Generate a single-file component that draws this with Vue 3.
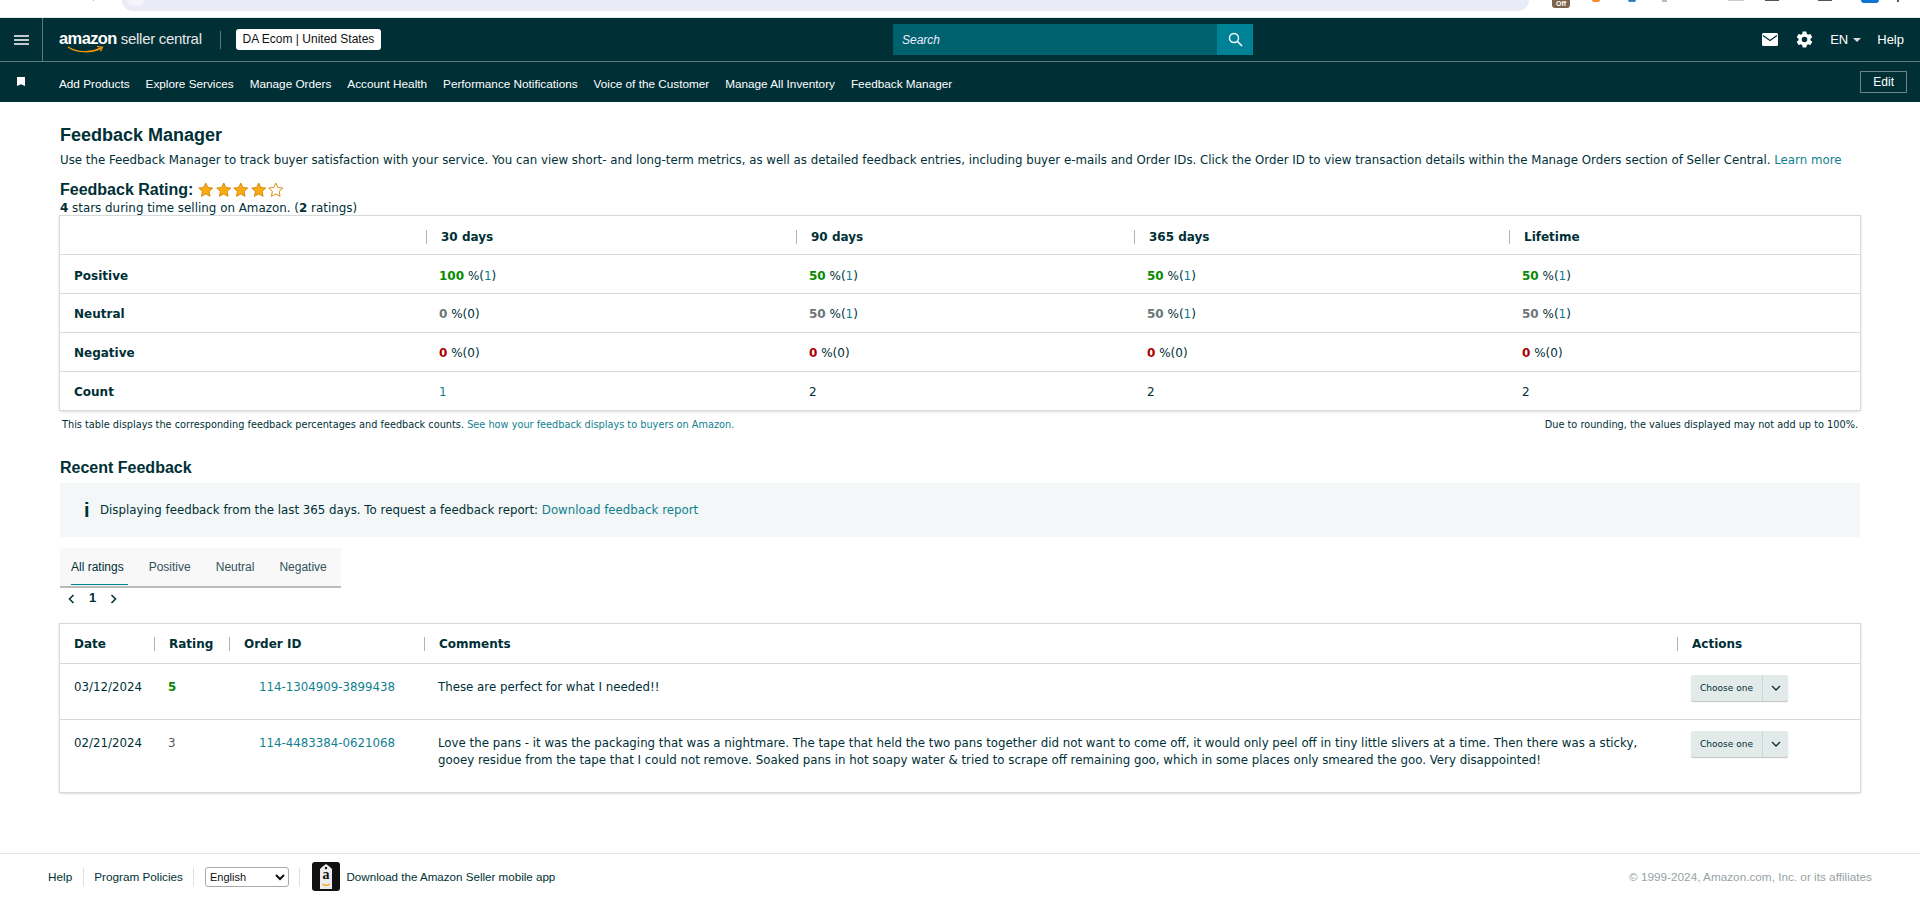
<template>
  <div class="page">
    <div class="chrome">
      <div class="tick"></div>
      <div class="address"><span class="site-badge"></span></div>
      <div class="ext-icons">
        <span class="ext off">Off</span>
        <span class="ext orange"></span>
        <span class="ext blue"></span>
        <span class="ext pin"></span>
        <span class="ext outline"></span>
        <span class="ext dark"></span>
        <span class="ext dark second"></span>
        <span class="ext profile"></span>
        <span class="ext menu"></span>
      </div>
    </div>

    <header class="topbar">
      <div class="burger">
        <svg width="15" height="10" viewBox="0 0 15 10"><path d="M0 1h15M0 5h15M0 9h15" stroke="#fff" stroke-width="1.500" /></svg>
      </div>
      <div class="logo">
        <span class="logo-amazon">amazon</span>
        <span class="logo-seller">seller central</span>
        <svg class="smile" width="38" height="8" viewBox="0 0 38 8"><path d="M1 1c9 6 24 6 33 1" fill="none" stroke="#f90" stroke-width="1.500" /><path d="M30 .5l5.500.8-2 4" fill="none" stroke="#f90" stroke-width="1.200" /></svg>
      </div>
      <div class="logo-sep"></div>
      <div class="account">DA Ecom | United States</div>
      <div class="search">
        <span class="search-text">Search</span>
        <span class="search-btn">
          <svg width="15" height="15" viewBox="0 0 15 15"><circle cx="6" cy="6" r="4.500" fill="none" stroke="#fff" stroke-width="1.400" /><path d="M9.500 9.500l4.500 4.500" stroke="#fff" stroke-width="1.600" /></svg>
        </span>
      </div>
      <div class="top-right">
        <svg width="16" height="13" viewBox="0 0 16 13"><rect width="16" height="13" rx="1.500" fill="#fff" /><path d="M1 2.500l7 5 7-5" fill="none" stroke="#002f36" stroke-width="1.300" /></svg>
        <svg class="gear" width="19" height="19" viewBox="0 0 24 24"><path fill="#fff" d="M19.430 12.980c.04-.32.070-.64.070-.98s-.030-.66-.070-.98l2.110-1.650c.19-.15.240-.42.120-.64l-2-3.460c-.12-.22-.39-.3-.61-.22l-2.490 1c-.52-.4-1.080-.73-1.690-.98l-.38-2.650A.488.488 0 0 0 14 2h-4c-.25 0-.46.18-.49.42l-.38 2.650c-.61.25-1.170.59-1.690.98l-2.490-1c-.23-.09-.49 0-.61.22l-2 3.460c-.13.22-.07.49.12.64l2.110 1.650c-.04.32-.07.65-.07.98s.030.66.070.98l-2.110 1.650c-.19.15-.24.42-.12.64l2 3.460c.12.22.39.3.61.22l2.490-1c.52.4 1.080.73 1.690.98l.38 2.650c.03.24.24.42.49.42h4c.25 0 .46-.18.49-.42l.38-2.650c.61-.25 1.170-.59 1.690-.98l2.490 1c.23.09.49 0 .61-.22l2-3.460c.12-.22.07-.49-.12-.64l-2.110-1.650zM12 15.500a3.500 3.500 0 1 1 0-7 3.500 3.500 0 0 1 0 7z" /></svg>
        <span class="lang">EN<i class="caret"></i></span>
        <span class="help">Help</span>
      </div>
    </header>

    <nav class="navbar">
      <svg class="bookmark" width="8" height="9" viewBox="0 0 8 9"><path d="M0 0h8v9L4 7.200 0 9z" fill="#fff" /></svg>
      <a v-for="item in navItems" :key="item">{{ item }}</a>
      <span class="edit">Edit</span>
    </nav>

    <main class="content">
      <h1>Feedback Manager</h1>
      <p class="intro">
        Use the Feedback Manager to track buyer satisfaction with your service. You can view short- and long-term metrics, as well as detailed feedback entries, including buyer e-mails and Order IDs. Click the Order ID to view transaction details within the Manage Orders section of Seller Central.
        <a>Learn more</a>
      </p>
      <div class="rating-title">
        <h2>Feedback Rating:</h2>
        <svg v-for="n in 5" :key="n" class="star" width="15" height="15" viewBox="0 0 24 24">
          <path d="M12 1.500l3.200 7 7.600.9-5.600 5.200 1.500 7.600L12 18.400l-6.700 3.800 1.500-7.600L1.200 9.400l7.600-.9z" :fill="n < 5 ? '#fdab12' : '#fff'" stroke="#d1890c" stroke-width="1.500" />
        </svg>
      </div>
      <p class="rating-sub"><b>4</b> stars during time selling on Amazon. (<b>2</b> ratings)</p>

      <table class="box ratings">
        <colgroup>
          <col class="r0" /><col class="r1" /><col class="r2" /><col class="r3" /><col />
        </colgroup>
        <thead>
          <tr>
            <th></th>
            <th v-for="p in periods" :key="p"><span class="th-in">{{ p }}</span></th>
          </tr>
        </thead>
        <tbody>
          <tr v-for="row in ratingRows" :key="row.label">
            <td class="label">{{ row.label }}</td>
            <td v-for="(cell, i) in row.cells" :key="i">
              <b :class="row.tone">{{ cell.pct }}</b> %(<a v-if="cell.link">{{ cell.n }}</a><template v-else>{{ cell.n }}</template>)
            </td>
          </tr>
          <tr>
            <td class="label">Count</td>
            <td><a>1</a></td>
            <td>2</td>
            <td>2</td>
            <td>2</td>
          </tr>
        </tbody>
      </table>

      <div class="table-note">
        <span>This table displays the corresponding feedback percentages and feedback counts. <a>See how your feedback displays to buyers on Amazon.</a></span>
        <span>Due to rounding, the values displayed may not add up to 100%.</span>
      </div>

      <h2 class="recent">Recent Feedback</h2>
      <div class="info">
        <span class="info-i">i</span>
        <span>Displaying feedback from the last 365 days. To request a feedback report: <a>Download feedback report</a></span>
      </div>

      <div class="tabs">
        <span v-for="(tab, i) in tabs" :key="tab" class="tab" :class="{ active: i === 0 }">{{ tab }}</span>
      </div>
      <div class="pager">
        <svg width="7" height="10" viewBox="0 0 7 10"><path d="M5.500 1L1.500 5l4 4" fill="none" stroke="#002f36" stroke-width="1.500" /></svg>
        <span class="page-num">1</span>
        <svg width="7" height="10" viewBox="0 0 7 10"><path d="M1.500 1l4 4-4 4" fill="none" stroke="#002f36" stroke-width="1.500" /></svg>
      </div>

      <table class="box feedback">
        <colgroup>
          <col class="f0" /><col class="f1" /><col class="f2" /><col class="f3" /><col />
        </colgroup>
        <thead>
          <tr>
            <th class="first">Date</th>
            <th v-for="h in feedbackHeads" :key="h"><span class="th-in">{{ h }}</span></th>
          </tr>
        </thead>
        <tbody>
          <tr v-for="row in feedback" :key="row.order" :class="row.cls">
            <td>{{ row.date }}</td>
            <td><b v-if="row.rating === 5" class="pos">5</b><span v-else class="grey">{{ row.rating }}</span></td>
            <td><a class="order">{{ row.order }}</a></td>
            <td class="comment">{{ row.comment }}</td>
            <td class="act">
              <div class="choose">
                <span class="choose-label">Choose one</span>
                <span class="choose-arrow">
                  <svg width="10" height="6" viewBox="0 0 10 6"><path d="M1 1l4 4 4-4" fill="none" stroke="#002f36" stroke-width="1.300" /></svg>
                </span>
              </div>
            </td>
          </tr>
        </tbody>
      </table>
    </main>

    <footer class="footer">
      <span class="foot-link">Help</span>
      <span class="foot-sep"></span>
      <span class="foot-link">Program Policies</span>
      <span class="foot-sep"></span>
      <select class="foot-select"><option>English</option></select>
      <span class="foot-sep tile-sep"></span>
      <span class="app-tile">
        <svg width="28" height="29" viewBox="0 0 28 29">
          <rect width="28" height="29" rx="3" fill="#111" />
          <path d="M10 5l4-3 4 3 2 2v20H8V7z" fill="#ececec" />
          <circle cx="14" cy="6" r="1.200" fill="#111" />
          <path d="M10.500 22c2.500 1.800 5 1.800 7 0" fill="none" stroke="#f90" stroke-width="1.200" />
        </svg>
        <span class="tile-a">a</span>
      </span>
      <span class="foot-link app-text">Download the Amazon Seller mobile app</span>
      <span class="copyright">© 1999-2024, Amazon.com, Inc. or its affiliates</span>
    </footer>
  </div>
</template>

<script setup>
const navItems = [
  "Add Products",
  "Explore Services",
  "Manage Orders",
  "Account Health",
  "Performance Notifications",
  "Voice of the Customer",
  "Manage All Inventory",
  "Feedback Manager",
];

const periods = ["30 days", "90 days", "365 days", "Lifetime"];

const ratingRows = [
  {
    label: "Positive",
    tone: "pos",
    cells: [
      { pct: 100, n: 1, link: true },
      { pct: 50, n: 1, link: true },
      { pct: 50, n: 1, link: true },
      { pct: 50, n: 1, link: true },
    ],
  },
  {
    label: "Neutral",
    tone: "neu",
    cells: [
      { pct: 0, n: 0 },
      { pct: 50, n: 1, link: true },
      { pct: 50, n: 1, link: true },
      { pct: 50, n: 1, link: true },
    ],
  },
  {
    label: "Negative",
    tone: "neg",
    cells: [
      { pct: 0, n: 0 },
      { pct: 0, n: 0 },
      { pct: 0, n: 0 },
      { pct: 0, n: 0 },
    ],
  },
];

const tabs = ["All ratings", "Positive", "Neutral", "Negative"];

const feedbackHeads = ["Rating", "Order ID", "Comments", "Actions"];

const feedback = [
  {
    date: "03/12/2024",
    rating: 5,
    order: "114-1304909-3899438",
    comment: "These are perfect for what I needed!!",
    cls: "short",
  },
  {
    date: "02/21/2024",
    rating: 3,
    order: "114-4483384-0621068",
    comment:
      "Love the pans - it was the packaging that was a nightmare. The tape that held the two pans together did not want to come off, it would only peel off in tiny little slivers at a time. Then there was a sticky, gooey residue from the tape that I could not remove. Soaked pans in hot soapy water & tried to scrape off remaining goo, which in some places only smeared the goo. Very disappointed!",
    cls: "tall",
  },
];
</script>

<style>
html,
body {
  margin: 0;
  background: #fff;
}
</style>

<style scoped>
.page {
  height: 923px;
  overflow: hidden;
  font-family: "DejaVu Sans", sans-serif;
  font-size: 12px;
  color: #002f36;
}
a {
  color: #0f7f90;
}

.chrome {
  height: 18px;
  display: flex;
  align-items: flex-start;
  background: #fff;
  border-bottom: 1px solid #e8e8e8;
  box-sizing: border-box;
}
.tick {
  width: 1px;
  height: 1px;
  background: #bbb;
  margin-left: 93px;
}
.address {
  margin-left: 28px;
  width: 1407px;
  height: 11px;
  background: #e9ebf6;
  border-radius: 0 0 14px 14px;
  padding-left: 5px;
  box-sizing: border-box;
}
.site-badge {
  display: block;
  width: 17px;
  height: 6px;
  background: #f5f5fb;
  border-radius: 0 0 9px 9px;
}
.ext-icons {
  display: flex;
  align-items: flex-start;
}
.ext {
  display: block;
}
.off {
  margin-left: 23px;
  width: 18px;
  height: 8px;
  background: #7c654c;
  border-radius: 0 0 3px 3px;
  color: #fff;
  font: bold 7px/7px "Liberation Sans", sans-serif;
  text-align: center;
}
.orange {
  margin-left: 22px;
  width: 8px;
  height: 2px;
  background: #f58a2a;
  border-radius: 0 0 4px 4px;
}
.blue {
  margin-left: 28px;
  width: 8px;
  height: 2px;
  background: #2a7fc0;
  border-radius: 0 0 4px 4px;
}
.pin {
  margin-left: 26px;
  width: 5px;
  height: 2px;
  background: #bbb;
}
.outline {
  margin-left: 61px;
  width: 16px;
  height: 1px;
  background: #ccc;
}
.dark {
  margin-left: 21px;
  width: 14px;
  height: 1px;
  background: #555;
}
.second {
  margin-left: 39px;
}
.profile {
  margin-left: 29px;
  width: 18px;
  height: 3px;
  background: #1173d4;
  border-radius: 0 0 9px 9px;
}
.menu {
  margin-left: 18px;
  width: 2px;
  height: 2px;
  background: #555;
}

.topbar {
  height: 44px;
  background: #002f36;
  border-bottom: 1px solid #5c7a7e;
  display: flex;
  align-items: center;
  color: #fff;
  font-family: "Liberation Sans", Arial, sans-serif;
  box-sizing: border-box;
  position: relative;
}
.burger {
  width: 42px;
  height: 100%;
  border-right: 1px solid #5c7a7e;
  display: flex;
  align-items: center;
  justify-content: center;
}
.logo {
  margin-left: 16px;
  width: 155px;
  position: relative;
  white-space: nowrap;
  margin-top: -3px;
}
.logo-amazon {
  font-size: 16.500px;
  font-weight: 700;
  letter-spacing: -0.6px;
}
.logo-seller {
  font-size: 15px;
  margin-left: 4px;
  color: #e4e8e8;
  letter-spacing: -0.3px;
}
.smile {
  position: absolute;
  left: 8px;
  top: 17px;
}
.logo-sep {
  width: 1px;
  height: 18px;
  background: #5c7a7e;
  margin-left: 6px;
}
.account {
  margin-left: 15px;
  height: 21px;
  line-height: 21px;
  padding: 0 6.500px;
  background: #fff;
  border-radius: 3px;
  color: #111;
  font-size: 12px;
  white-space: nowrap;
}
.search {
  position: absolute;
  left: 893px;
  top: 6px;
  width: 360px;
  height: 31px;
  background: #00616e;
  display: flex;
  justify-content: space-between;
  align-items: center;
}
.search-text {
  font-style: italic;
  margin-left: 9px;
  font-size: 12px;
  color: #eef;
}
.search-btn {
  width: 36px;
  height: 100%;
  background: #008296;
  display: flex;
  align-items: center;
  justify-content: center;
}
.top-right {
  margin-left: auto;
  display: flex;
  align-items: center;
  font-size: 13px;
  padding-right: 16px;
}
.gear {
  margin-left: 17px;
}
.lang {
  margin-left: 16px;
}
.caret {
  display: inline-block;
  margin-left: 5px;
  border: 4px solid transparent;
  border-top-color: #ddd;
  border-bottom: 0;
  vertical-align: 2px;
}
.help {
  margin-left: 16px;
}

.navbar {
  height: 40px;
  background: #002f36;
  display: flex;
  align-items: center;
  font-family: "Liberation Sans", Arial, sans-serif;
  color: #fff;
  font-size: 11.750px;
  padding-left: 17px;
  padding-right: 13px;
  box-sizing: border-box;
}
.navbar a {
  color: #fff;
  margin-right: 16px;
  margin-top: 3px;
  white-space: nowrap;
}
.bookmark {
  margin-right: 34px;
  margin-top: -1px;
}
.edit {
  margin-left: auto;
  border: 1px solid #6d8588;
  padding: 0 12px;
  height: 22px;
  line-height: 20px;
  box-sizing: border-box;
  margin-top: -1px;
  font-size: 12px;
}

.content {
  padding: 22px 60px 0 60px;
}
h1 {
  margin: 0;
  font-size: 18px;
  line-height: 22px;
  font-weight: 700;
  font-family: "Liberation Sans", Arial, sans-serif;
}
.intro {
  margin: 5px 0 0;
  line-height: 18px;
  font-size: 11.800px;
  white-space: nowrap;
}
.rating-title {
  margin-top: 11px;
  display: flex;
  align-items: center;
  height: 20px;
  gap: 2px;
}
.star {
  width: 15.500px;
  height: 15.500px;
}
h2 {
  margin: 0;
  font-size: 16px;
  font-weight: 700;
  font-family: "Liberation Sans", Arial, sans-serif;
}
.rating-title h2 {
  margin-right: 3px;
}
.rating-sub {
  margin: 1px 0 0;
  line-height: 14px;
  font-size: 11.900px;
}

.box {
  width: 1800px;
  border-collapse: collapse;
  table-layout: fixed;
  box-shadow: 0 0 0 1px #d5dbdb, 0 1px 3px rgba(0, 0, 0, 0.25);
}
.ratings {
  margin-top: 1px;
}
.r0 {
  width: 366px;
}
.r1 {
  width: 370px;
}
.r2 {
  width: 338px;
}
.r3 {
  width: 375px;
}
th {
  text-align: left;
  font-weight: 700;
  padding: 0;
}
.th-in {
  display: block;
  border-left: 1px solid #aab7b8;
  padding-left: 14px;
  line-height: 14px;
}
td {
  padding: 0 14px;
}
.ratings thead th {
  padding-top: 5px;
}
.ratings thead tr {
  height: 38px;
}
.ratings tbody tr {
  height: 39px;
  border-top: 1px solid #d5dbdb;
}
.ratings tbody td {
  padding-top: 2px;
}
.ratings tbody tr:first-child td {
  padding-top: 4px;
}
.ratings .label {
  font-weight: 700;
}
.ratings td:nth-child(n + 2) {
  padding-left: 13px;
}
.pos {
  color: #078a00;
}
.neu {
  color: #6c7778;
}
.neg {
  color: #a00;
}
.grey {
  color: #555;
}

.table-note {
  display: flex;
  justify-content: space-between;
  padding: 8px 2px 0;
  font-size: 9.750px;
  line-height: 13px;
}
.recent {
  margin-top: 27px;
  line-height: 20px;
  font-size: 16px;
}
.info {
  margin-top: 5px;
  height: 54px;
  background: #f3f7f7;
  display: flex;
  align-items: center;
  font-size: 11.800px;
}
.info-i {
  width: 16px;
  margin-left: 24px;
  font-family: "Liberation Sans", sans-serif;
  font-weight: 700;
  font-size: 20px;
}
.tabs {
  margin-top: 11px;
  width: 281px;
  height: 40px;
  background: #f8f8f8;
  border-bottom: 2px solid #bbb;
  box-sizing: border-box;
  display: flex;
  padding-left: 11px;
  gap: 25px;
  font-family: "Liberation Sans", Arial, sans-serif;
}
.tab {
  line-height: 39px;
  height: 37px;
  box-sizing: border-box;
  color: #33525a;
}
.tab.active {
  color: #002f36;
  border-bottom: 1px solid #008296;
  padding-right: 4px;
  margin-right: -4px;
}
.pager {
  height: 22px;
  display: flex;
  align-items: center;
  gap: 14px;
  padding-left: 8px;
  font-weight: 700;
  font-family: "Liberation Sans", Arial, sans-serif;
  font-size: 13px;
}
.page-num {
  margin-top: -4px;
}

.feedback {
  margin-top: 14px;
}
.f0 {
  width: 94px;
}
.f1 {
  width: 75px;
}
.f2 {
  width: 195px;
}
.f3 {
  width: 1253px;
}
.feedback thead tr {
  height: 39px;
}
.feedback thead th {
  padding-top: 2px;
}
.feedback th.first {
  padding-left: 14px;
}
.feedback tbody tr {
  border-top: 1px solid #d5dbdb;
}
.feedback tbody td {
  vertical-align: top;
  padding-top: 15px;
  line-height: 17px;
  padding-left: 14px;
  padding-right: 0;
  font-size: 11.800px;
}
.order {
  padding-left: 16px;
}
.feedback .short {
  height: 56px;
}
.feedback .tall {
  height: 73px;
}
.feedback tbody td.act {
  padding-top: 11px;
}
.choose {
  display: flex;
  width: 97px;
  height: 26px;
  background: #e3eaea;
  border-radius: 2px;
  box-shadow: 0 1px 1px rgba(0, 0, 0, 0.25);
  font-size: 9px;
  line-height: 26px;
}
.choose-label {
  width: 71px;
  text-align: center;
  border-right: 1px solid #cdd6d6;
}
.choose-arrow {
  flex: 1;
  display: flex;
  align-items: center;
  justify-content: center;
}

.footer {
  position: absolute;
  top: 853px;
  left: 0;
  width: 100%;
  box-sizing: border-box;
  border-top: 1px solid #e5e5e5;
  height: 46px;
  padding: 0 48px;
  display: flex;
  align-items: center;
  font-family: "Liberation Sans", Arial, sans-serif;
  font-size: 11.750px;
}
.foot-sep {
  width: 1px;
  height: 18px;
  background: #e0e0e0;
  margin: 0 10.500px;
}
.tile-sep {
  margin-right: 12px;
}
.foot-select {
  width: 84px;
  height: 20px;
  font-family: "Liberation Sans", Arial, sans-serif;
  font-size: 11px;
  background: #fff;
  border: 1px solid #aaa;
  border-radius: 3px;
  color: #111;
}
.app-tile {
  position: relative;
  width: 28px;
  height: 29px;
  margin-right: 6px;
}
.tile-a {
  position: absolute;
  left: 10px;
  top: 6px;
  font: 700 14px/14px "Liberation Serif", serif;
  color: #111;
}
.app-text {
  font-size: 11.600px;
}
.copyright {
  margin-left: auto;
  color: #97a3a4;
}
</style>
